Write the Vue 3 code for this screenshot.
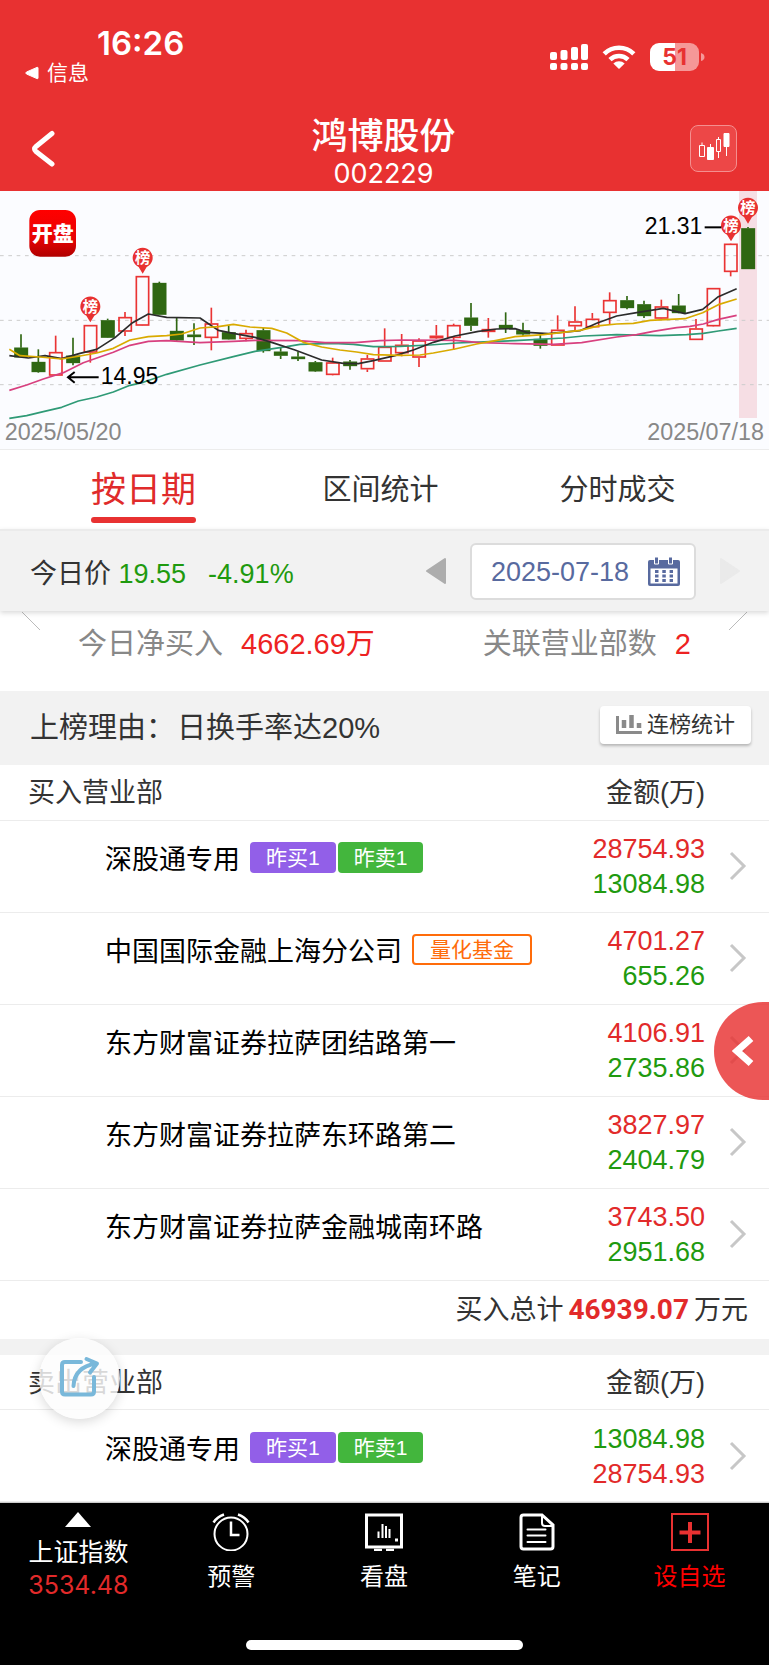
<template>
    <div class="page">
        <header class="header">
            <div class="status-bar">
                <div class="status-left">
                    <div class="clock">16:26</div>
                    <a class="back-app" href="#">
                        <svg width="14" height="14" viewBox="0 0 14 14"><path d="M13 2v10q0 1-1 .6L1.500 8q-1.500-1 0-2L12 1.400q1-.4 1 .6z" fill="#fff" stroke="#fff" /></svg>
                        信息
                    </a>
                </div>
                <div class="status-right">
                    <svg width="38" height="28" viewBox="0 0 38 28" fill="#fff">
                        <rect x="0" y="9" width="7" height="8" rx="2" />
                        <rect x="10.500" y="7" width="7" height="10" rx="2" />
                        <rect x="21" y="4" width="7" height="13" rx="2" />
                        <rect x="31" y="1" width="7" height="16" rx="2" />
                        <rect x="0" y="20" width="7" height="7" rx="2" />
                        <rect x="10.500" y="20" width="7" height="7" rx="2" />
                        <rect x="21" y="20" width="7" height="7" rx="2" />
                        <rect x="31" y="20" width="7" height="7" rx="2" />
                    </svg>
                    <svg width="34" height="26" viewBox="0 0 34 26" fill="none" stroke="#fff" stroke-width="4.600">
                        <path d="M2.200 9.800a21 21 0 0 1 29.600 0" />
                        <path d="M8 15.600a13 13 0 0 1 18 0" />
                        <path d="M11.300 19.400a8.400 8.400 0 0 1 11.400 0L17 25z" fill="#fff" stroke="none" />
                    </svg>
                    <div class="battery">
                        <span class="battery-body">51</span>
                        <svg width="4" height="8" viewBox="0 0 4 8"><path d="M0 0q3.500 1 3.500 4T0 8z" fill="#f59898" /></svg>
                    </div>
                </div>
            </div>
            <div class="title-bar">
                <button class="icon-btn" aria-label="返回">
                    <svg width="26" height="38" viewBox="0 0 26 38"><path d="M22 3.500 6 16.500q-3 2.500 0 5L22 34" fill="none" stroke="#fff" stroke-width="5" stroke-linecap="round" /></svg>
                </button>
                <div class="title">
                    <h1>鸿博股份</h1>
                    <p>002229</p>
                </div>
                <button class="icon-btn kline-btn" aria-label="K线">
                    <svg width="34" height="32" viewBox="0 0 34 32" fill="none" stroke="#fff">
                        <path d="M2.500 12.500h5v11h-5zM5 9.500v3" />
                        <path d="M13.500 11v4" />
                        <path d="M10.500 14.500h6v12h-6z" fill="#fff" />
                        <path d="M19.500 6.500h4v12h-4zM21.500 4v2.500M21.500 18.500V25" />
                        <path d="M27 .500h5v13h-5z" fill="#fff" />
                        <path d="M29.500 14v9" />
                    </svg>
                </button>
            </div>
        </header>

        <section class="chart">
            <svg viewBox="0 3 2307 774" class="chart-svg">
                <defs>
                    <linearGradient id="logo" x1="0" y1="0" x2="0" y2="1">
                        <stop offset="0" stop-color="#f00" />
                        <stop offset="0.6" stop-color="#e80404" />
                        <stop offset="1" stop-color="#b00000" />
                    </linearGradient>
                </defs>
                <rect x="2217" y="3" width="54" height="681" fill="#f6dee4" />
                <line v-for="y in gridLines" :key="y" x1="0" x2="2307" :y1="y" :y2="y" class="grid" />
                <g v-for="(c, i) in candles" :key="i" :class="c[0] === 'r' ? 'up' : 'down'">
                    <line :x1="candleX(i)" :x2="candleX(i)" :y1="c[1]" :y2="c[3]" />
                    <line :x1="candleX(i)" :x2="candleX(i)" :y1="c[4]" :y2="c[2]" />
                    <rect :x="candleX(i) - 18" :y="c[3] + 2" width="37" :height="Math.max(c[4] - c[3] - 4, 2)" />
                </g>
                <polyline v-for="l in averages" :key="l.color" :points="l.points" :stroke="l.color" class="average" />
                <g v-for="p in pins" :key="p.x" :transform="`translate(${p.x} ${p.y})`">
                    <path d="M0 47 -12 27A30 30 0 1 1 12 27z" fill="#e83131" />
                    <text y="16" class="pin-text">榜</text>
                </g>
                <rect x="88" y="60" width="140" height="140" rx="32" fill="url(#logo)" />
                <text x="158" y="154" class="logo-text">开盘</text>
                <path d="M204 562h92M224 546l-20 16 20 16" class="pointer" />
                <text x="302" y="583" class="price-text">14.95</text>
                <path d="M2114 112h50" class="pointer" />
                <text x="2107" y="133" class="price-text end">21.31</text>
                <text x="14" y="751" class="date-text">2025/05/20</text>
                <text x="2292" y="751" class="date-text end">2025/07/18</text>
            </svg>
        </section>

        <nav class="tabs">
            <button v-for="(t, i) in tabs" :key="t" class="tab" :class="{ active: tab === i }" @click="tab = i">
                <span>{{ t }}</span>
            </button>
        </nav>

        <section class="price-bar">
            <div class="price">今日价 <b>19.55</b><b class="change">-4.91%</b></div>
            <button class="icon-btn" aria-label="前一天">
                <svg width="22" height="28" viewBox="0 0 22 28"><path d="M20 2v24L2 14z" fill="#adadad" stroke="#adadad" stroke-width="2" stroke-linejoin="round" /></svg>
            </button>
            <label class="date-box">
                <input v-model="date" type="text" aria-label="日期">
                <svg width="32" height="30" viewBox="0 0 32 30">
                    <rect x="0" y="4" width="32" height="26" rx="2" fill="#586a9f" />
                    <path d="M2.500 12.500h27v15h-27z" fill="#fff" />
                    <path d="M6.500 1h4v7h-4zM20.500 1h4v7h-4z" fill="#586a9f" stroke="#fff" />
                    <path d="M7 15.500h18M7 20h18M7 24.500h18" stroke="#586a9f" stroke-width="3" stroke-dasharray="3.500 3.800" />
                </svg>
            </label>
            <button class="icon-btn" aria-label="后一天">
                <svg width="22" height="28" viewBox="0 0 22 28"><path d="M2 2v24l18-12z" fill="#eaeaea" stroke="#eaeaea" stroke-width="2" stroke-linejoin="round" /></svg>
            </button>
        </section>

        <section class="summary">
            <svg class="corner" width="18" height="20" viewBox="0 0 18 20"><path d="M0 1l18 18" /></svg>
            <div class="stat">今日净买入<b>4662.69万</b></div>
            <div class="stat">关联营业部数<b>2</b></div>
            <svg class="corner" width="18" height="20" viewBox="0 0 18 20"><path d="M18 1 0 19" /></svg>
        </section>

        <section class="reason">
            <p>上榜理由：<span>日换手率达20%</span></p>
            <button class="stats-btn">
                <svg width="26" height="20" viewBox="0 0 26 20" fill="none" stroke="#8a8a8a">
                    <path d="M1.500 1v16.500H26" stroke-width="3" />
                    <path d="M8 13V5M15.500 13V0M23 13V8" stroke-width="4.500" />
                </svg>
                <span>连榜统计</span>
            </button>
        </section>

        <template v-for="t in tables" :key="t.title">
            <table class="list">
                <thead>
                    <tr>
                        <th class="col-name">{{ t.title }}</th>
                        <th class="col-amount">金额(万)</th>
                        <th class="col-arrow"></th>
                    </tr>
                </thead>
                <tbody>
                    <tr v-for="r in t.rows" :key="r.name">
                        <td class="col-name">
                            <div class="dept">
                                <span>{{ r.name }}</span>
                                <span class="tags">
                                    <i v-for="g in r.tags" :key="g.text" class="tag" :class="g.kind">{{ g.text }}</i>
                                </span>
                            </div>
                        </td>
                        <td class="col-amount">
                            <div :class="t.colors[0]">{{ r.first }}</div>
                            <div :class="t.colors[1]">{{ r.second }}</div>
                        </td>
                        <td class="col-arrow">
                            <svg width="18" height="30" viewBox="0 0 18 30"><path d="M2 2l13 13L2 28" fill="none" stroke="#c7c7c7" stroke-width="3" /></svg>
                        </td>
                    </tr>
                </tbody>
            </table>
            <div v-if="t.total" class="total">买入总计<b>{{ t.total }}</b>万元</div>
        </template>

        <button class="drawer-btn" aria-label="展开">
            <svg width="22" height="32" viewBox="0 0 22 32"><path d="M19 3.500 5 16l14 12.500" fill="none" stroke="#fff" stroke-width="7" /></svg>
        </button>
        <button class="share-btn" aria-label="分享">
            <svg width="42" height="42" viewBox="0 0 42 42" fill="none" stroke="#79b8da" stroke-width="4" stroke-linecap="round" stroke-linejoin="round">
                <path d="M22 6H6Q3 6 3 9v26.500q0 3 3 3h26q3 0 3-3V21" />
                <path d="M14.500 30Q15.500 11 37 7.500M27.500 3l10.500 4.500-7 9" />
            </svg>
        </button>

        <footer class="bottom">
            <nav class="bottom-nav">
                <a href="#" class="index">
                    <svg width="26" height="16" viewBox="0 0 26 16"><path d="M13 0l13 15H0z" fill="#fff" /></svg>
                    <span>上证指数</span>
                    <span class="index-value">3534.48</span>
                </a>
                <a href="#">
                    <svg width="38" height="38" viewBox="0 0 38 38" fill="none" stroke="#fff" stroke-width="2">
                        <circle cx="19" cy="21" r="16.500" />
                        <path d="M19 8.500V22h8.500M1.500 9.500Q5 4 12 1.500M36.500 9.500Q33 4 26 1.500" stroke-width="2.500" />
                    </svg>
                    <span>预警</span>
                </a>
                <a href="#">
                    <svg width="38" height="38" viewBox="0 0 38 38" fill="none" stroke="#fff" stroke-width="2">
                        <path d="M1.500 2h35v32h-35z" stroke-width="3" />
                        <path d="M9 37h8M21 37h8" stroke-width="2.500" />
                        <path d="M13.500 18.500V25M17.500 11v14M21 13v12M24.500 16v9" />
                        <path d="M30 27h3" stroke-width="3" />
                    </svg>
                    <span>看盘</span>
                </a>
                <a href="#">
                    <svg width="38" height="38" viewBox="0 0 38 38" fill="none" stroke="#fff" stroke-width="2">
                        <path d="M24 2H5.500Q3 2 3 4.500v29Q3 36 5.500 36h27q2.500 0 2.500-2.500V12z" stroke-width="3" />
                        <path d="M24 2v8q0 3 3 3h8" />
                        <path d="M9.500 16.500h18M9.500 22.500h18M9.500 29h18" stroke-linecap="round" />
                    </svg>
                    <span>笔记</span>
                </a>
                <a href="#" class="add">
                    <svg width="38" height="38" viewBox="0 0 38 38" fill="none" stroke="#e83131">
                        <path d="M1 1h36v36H1z" stroke-width="2" />
                        <path d="M8.500 19.500h21M19 9v21" stroke-width="4" />
                    </svg>
                    <span>设自选</span>
                </a>
            </nav>
            <div class="home-indicator"></div>
        </footer>
    </div>
</template>

<script setup>
import { ref } from 'vue';

const tabs = ['按日期', '区间统计', '分时成交'];
const tab = ref(0);
const date = ref('2025-07-18');

const gridLines = [197, 391, 584];

// [kind, high, low, body top, body bottom]
const candles = [
    ['g', 433, 502, 473, 502],
    ['g', 478, 548, 516, 546],
    ['r', 437, 557, 486, 557],
    ['g', 443, 526, 497, 519],
    ['r', 406, 518, 405, 488],
    ['g', 386, 444, 391, 443],
    ['r', 366, 438, 381, 425],
    ['r', 259, 406, 258, 407],
    ['g', 275, 375, 279, 374],
    ['g', 383, 453, 423, 451],
    ['g', 400, 465, 434, 441],
    ['r', 353, 481, 400, 444],
    ['g', 407, 449, 427, 448],
    ['r', 419, 454, 429, 447],
    ['g', 414, 488, 421, 483],
    ['g', 471, 507, 485, 497],
    ['g', 485, 513, 500, 507],
    ['g', 513, 546, 517, 544],
    ['r', 503, 556, 517, 555],
    ['g', 510, 539, 515, 528],
    ['r', 495, 546, 505, 538],
    ['r', 415, 515, 470, 515],
    ['r', 432, 499, 464, 490],
    ['r', 445, 531, 451, 503],
    ['r', 405, 447, 437, 445],
    ['r', 401, 480, 405, 444],
    ['g', 339, 423, 383, 407],
    ['r', 384, 443, 417, 426],
    ['g', 367, 429, 405, 416],
    ['g', 398, 438, 421, 433],
    ['g', 433, 476, 447, 467],
    ['r', 376, 467, 419, 467],
    ['r', 349, 423, 394, 409],
    ['r', 369, 411, 386, 412],
    ['r', 307, 403, 330, 369],
    ['g', 318, 358, 331, 354],
    ['g', 332, 384, 343, 378],
    ['r', 329, 385, 349, 386],
    ['g', 312, 370, 347, 369],
    ['r', 387, 449, 415, 450],
    ['r', 295, 408, 294, 409],
    ['r', 162, 259, 161, 246],
    ['g', 111, 237, 115, 237],
];

const candleX = (i) => Math.round(63 + i * 51.93);

const averages = [
    { color: '#2f9a76', points: '28,685 80,677 130,665 185,652 235,633 290,621 340,606 390,586 430,577 500,553 600,525 700,500 765,484 860,470 900,463 1000,460 1060,463 1120,470 1200,469 1290,465 1370,459 1470,455 1545,452 1690,444 1750,438 1850,434 1980,437 2060,434 2110,430 2155,423 2210,415' },
    { color: '#d8407f', points: '28,601 80,585 130,567 190,548 250,518 340,487 390,466 445,454 500,452 600,458 700,454 765,451 895,452 975,458 1065,458 1140,452 1210,450 1365,451 1440,458 1545,461 1660,463 1745,458 1850,441 1910,434 1960,424 2030,413 2070,409 2110,402 2155,388 2210,376' },
    { color: '#2c2c2c', points: '28,497 85,504 135,497 185,506 240,490 290,478 345,443 395,400 445,372 500,382 600,384 655,421 700,430 765,442 815,457 885,480 965,510 1030,520 1075,521 1120,512 1185,497 1240,480 1300,457 1365,438 1435,424 1490,417 1545,416 1580,427 1645,431 1740,422 1790,400 1850,378 1910,368 1990,355 2055,371 2108,358 2155,320 2210,296' },
    { color: '#d9aa00', points: '28,478 60,497 120,501 185,507 240,498 290,489 340,475 390,450 445,440 500,437 545,432 600,414 655,410 700,403 750,411 815,415 860,429 910,457 965,471 1020,480 1070,486 1120,494 1200,496 1260,495 1300,489 1365,477 1430,462 1490,451 1545,440 1630,434 1740,421 1800,407 1850,402 1900,400 1950,391 2055,386 2108,368 2155,344 2210,327' },
];

const pins = [
    { x: 271, y: 350 },
    { x: 428, y: 204 },
    { x: 2193, y: 107 },
    { x: 2244, y: 54 },
];

const dayTags = [
    { text: '昨买1', kind: 'buy' },
    { text: '昨卖1', kind: 'sell' },
];

const tables = [
    {
        title: '买入营业部',
        colors: ['red', 'green'],
        total: '46939.07',
        rows: [
            { name: '深股通专用', tags: dayTags, first: '28754.93', second: '13084.98' },
            { name: '中国国际金融上海分公司', tags: [{ text: '量化基金', kind: 'fund' }], first: '4701.27', second: '655.26' },
            { name: '东方财富证券拉萨团结路第一', tags: [], first: '4106.91', second: '2735.86' },
            { name: '东方财富证券拉萨东环路第二', tags: [], first: '3827.97', second: '2404.79' },
            { name: '东方财富证券拉萨金融城南环路', tags: [], first: '3743.50', second: '2951.68' },
        ],
    },
    {
        title: '卖出营业部',
        colors: ['green', 'red'],
        rows: [
            { name: '深股通专用', tags: dayTags, first: '13084.98', second: '28754.93' },
        ],
    },
];
</script>

<style>
body {
    margin: 0;
    background: #fff;
}
</style>

<style scoped>
.page {
    position: relative;
    font-family: 'Liberation Sans', 'Noto Sans CJK SC', sans-serif;
    font-size: 27px;
    color: #333;
    background: #fff;
}

.page * {
    box-sizing: border-box;
}

svg {
    display: block;
    flex: none;
}

button {
    font-family: inherit;
    border: none;
    background: none;
    padding: 0;
    color: inherit;
    cursor: pointer;
}

a {
    color: inherit;
    text-decoration: none;
}

.header {
    background: #e83131;
    color: #fff;
}

.status-bar {
    display: flex;
    justify-content: space-between;
    height: 104px;
    padding: 25px 64px 0 25px;
}

.clock {
    padding-left: 72px;
    font-family: Inter, sans-serif;
    font-size: 33px;
    font-weight: 600;
    line-height: 36px;
}

.back-app {
    display: flex;
    align-items: center;
    gap: 8px;
    font-size: 21px;
    line-height: 24px;
}

.status-right {
    display: flex;
    align-items: center;
    align-self: flex-start;
    gap: 14px;
    padding-top: 18px;
}

.battery {
    display: flex;
    align-items: center;
    gap: 2px;
}

.battery-body {
    width: 49px;
    height: 28px;
    border-radius: 9px;
    background: linear-gradient(90deg, #fff 51%, #f59898 51%);
    color: #e83131;
    font-family: Inter, sans-serif;
    font-size: 23px;
    font-weight: 700;
    line-height: 28px;
    text-align: center;
}

.title-bar {
    display: grid;
    grid-template-columns: 1fr auto 1fr;
    align-items: center;
    height: 87px;
    padding: 2px 32px 0 30px;
}

.title {
    text-align: center;
}

.title h1 {
    margin: 0;
    font-size: 36px;
    font-weight: 500;
    line-height: 50px;
}

.title p {
    margin: 0;
    font-family: Inter, sans-serif;
    font-size: 27px;
    line-height: 24px;
}

.kline-btn {
    display: flex;
    align-items: center;
    justify-content: center;
    justify-self: end;
    width: 47px;
    height: 47px;
    border: 1px solid #f48f8f;
    border-radius: 8px;
    background: #ed4747;
}

.chart {
    background: #fbfcff;
    border-bottom: 1px solid #ececec;
}

.chart-svg {
    width: 100%;
    height: auto;
}

.grid {
    stroke: #ccc;
    stroke-width: 3;
    stroke-dasharray: 11 14;
}

.up,
.down {
    stroke-width: 5;
}

.up {
    stroke: #ea3434;
    fill: none;
}

.down {
    stroke: #2f6712;
    fill: #2f6712;
}

.average {
    fill: none;
    stroke-width: 5;
    stroke-linejoin: round;
}

.pin-text {
    font-size: 46px;
    font-weight: 700;
    fill: #fff;
    text-anchor: middle;
}

.logo-text {
    font-size: 63px;
    font-weight: 900;
    fill: #fff;
    text-anchor: middle;
}

.pointer {
    fill: none;
    stroke: #000;
    stroke-width: 6;
}

.price-text {
    font-size: 69px;
    fill: #000;
}

.date-text {
    font-size: 70px;
    fill: #888;
}

.end {
    text-anchor: end;
}

.tabs {
    display: flex;
    height: 79px;
    padding: 0 33px 0 25px;
}

.tab {
    flex: 1;
    display: flex;
    justify-content: center;
    font-size: 29px;
}

.tab span {
    padding-top: 13px;
    line-height: 54px;
}

.tab.active span {
    color: #e02b2b;
    font-size: 35px;
}

.tab.active span::after {
    content: '';
    display: block;
    height: 6px;
    border-radius: 3px;
    background: #e83131;
}

.price-bar {
    position: relative;
    display: flex;
    align-items: center;
    gap: 23px;
    height: 82px;
    padding: 0 28px 0 30px;
    background: #f2f2f2;
    border-top: 2px solid #ebebeb;
    box-shadow: 0 2px 5px rgba(0, 0, 0, 0.15);
}

.price {
    flex: 1;
}

.price b {
    margin-right: 22px;
    font-weight: 400;
    color: #1f9a0f;
}

.date-box {
    display: flex;
    align-items: center;
    justify-content: space-between;
    width: 226px;
    height: 57px;
    padding: 0 14px 0 19px;
    border: 2px solid #dcdcdc;
    border-radius: 6px;
    background: #fff;
}

.date-box input {
    flex: 1;
    min-width: 0;
    padding: 2px 0 0;
    border: none;
    outline: none;
    background: none;
    font-family: inherit;
    font-size: 27px;
    color: #586a9f;
}

.summary {
    display: flex;
    justify-content: space-between;
    height: 80px;
    padding: 0 22px;
    font-size: 29px;
    line-height: 66px;
    color: #888;
}

.corner {
    fill: none;
    stroke: #bbb;
}

.stat {
    margin: 0 38px;
}

.stat b {
    margin-left: 18px;
    font-weight: 400;
    color: #ed2222;
}

.stat + .stat {
    margin-left: auto;
}

.reason {
    display: flex;
    align-items: center;
    justify-content: space-between;
    height: 74px;
    padding: 0 18px 6px 30px;
    background: #f2f2f2;
}

.reason p {
    margin: 0;
    font-size: 29px;
}

.reason p span {
    margin-left: 2px;
}

.stats-btn {
    display: flex;
    align-items: center;
    justify-content: center;
    gap: 5px;
    width: 151px;
    height: 38px;
    border-radius: 4px;
    background: #fff;
    box-shadow: 0 2px 3px rgba(0, 0, 0, 0.25);
    font-size: 22px;
}

.stats-btn span {
    padding-bottom: 6px;
}

.list {
    width: 100%;
    border-collapse: collapse;
}

.list th,
.list td {
    padding: 0;
    border-bottom: 1px solid #ececec;
}

.list th {
    height: 55px;
    padding-bottom: 3px;
    font-weight: 400;
    text-align: left;
}

.list th.col-name {
    padding-left: 28px;
}

.list th.col-amount,
.list td.col-amount {
    text-align: right;
}

.list td {
    height: 92px;
    color: #000;
}

.list td.col-name {
    padding: 0 0 17px 105px;
}

.list td.col-amount {
    width: 130px;
    padding-top: 2px;
    line-height: 35px;
}

.list td.col-arrow,
.list th.col-arrow {
    width: 64px;
    padding-left: 24px;
}

.dept {
    display: flex;
    align-items: center;
    gap: 10px;
    white-space: nowrap;
}

.tags {
    display: flex;
    gap: 2px;
}

.tag {
    height: 31px;
    padding: 0 16px;
    border-radius: 4px;
    font-size: 21px;
    font-style: normal;
    line-height: 31px;
    color: #fff;
}

.tag.buy {
    background: #925fe8;
}

.tag.sell {
    background: #43b63d;
}

.tag.fund {
    border: 2px solid #ff6c0a;
    color: #ff6c0a;
    line-height: 27px;
}

.list .red {
    color: #e22a2a;
}

.list .green {
    color: #1f9a0f;
}

.total {
    padding-right: 21px;
    border-bottom: 16px solid #f2f2f2;
    line-height: 57px;
    text-align: right;
}

.total b {
    margin: 0 5px;
    font-family: Roboto, sans-serif;
    font-size: 28px;
    color: #e22a2a;
}

.drawer-btn {
    position: absolute;
    top: 1002px;
    right: 0;
    width: 55px;
    height: 98px;
    padding-left: 18px;
    border-radius: 49px 0 0 49px;
    background: rgba(232, 49, 49, 0.82);
}

.share-btn {
    position: absolute;
    left: 39px;
    bottom: 247px;
    display: flex;
    align-items: center;
    justify-content: center;
    width: 81px;
    height: 81px;
    padding-bottom: 3px;
    border-radius: 50%;
    background: rgba(253, 253, 253, 0.82);
    box-shadow: 0 3px 12px rgba(0, 0, 0, 0.15);
}

.bottom {
    height: 164px;
    border-top: 1px solid #ccc;
    background: #000;
    color: #fff;
}

.bottom-nav {
    display: flex;
    height: 137px;
    padding: 0 3px 0 2px;
}

.bottom-nav a {
    flex: 1;
    display: flex;
    flex-direction: column;
    align-items: center;
    gap: 9px;
    padding-top: 10px;
    font-size: 24px;
    line-height: 34px;
}

.bottom-nav .index {
    gap: 7px;
    padding-top: 9px;
    font-size: 25px;
}

.bottom-nav .index-value {
    font-family: Inter, sans-serif;
    line-height: 18px;
    color: #e22a2a;
}

.bottom-nav .add {
    color: #f00;
}

.home-indicator {
    width: 36%;
    height: 10px;
    margin: 0 auto;
    border-radius: 5px;
    background: #fff;
}
</style>
